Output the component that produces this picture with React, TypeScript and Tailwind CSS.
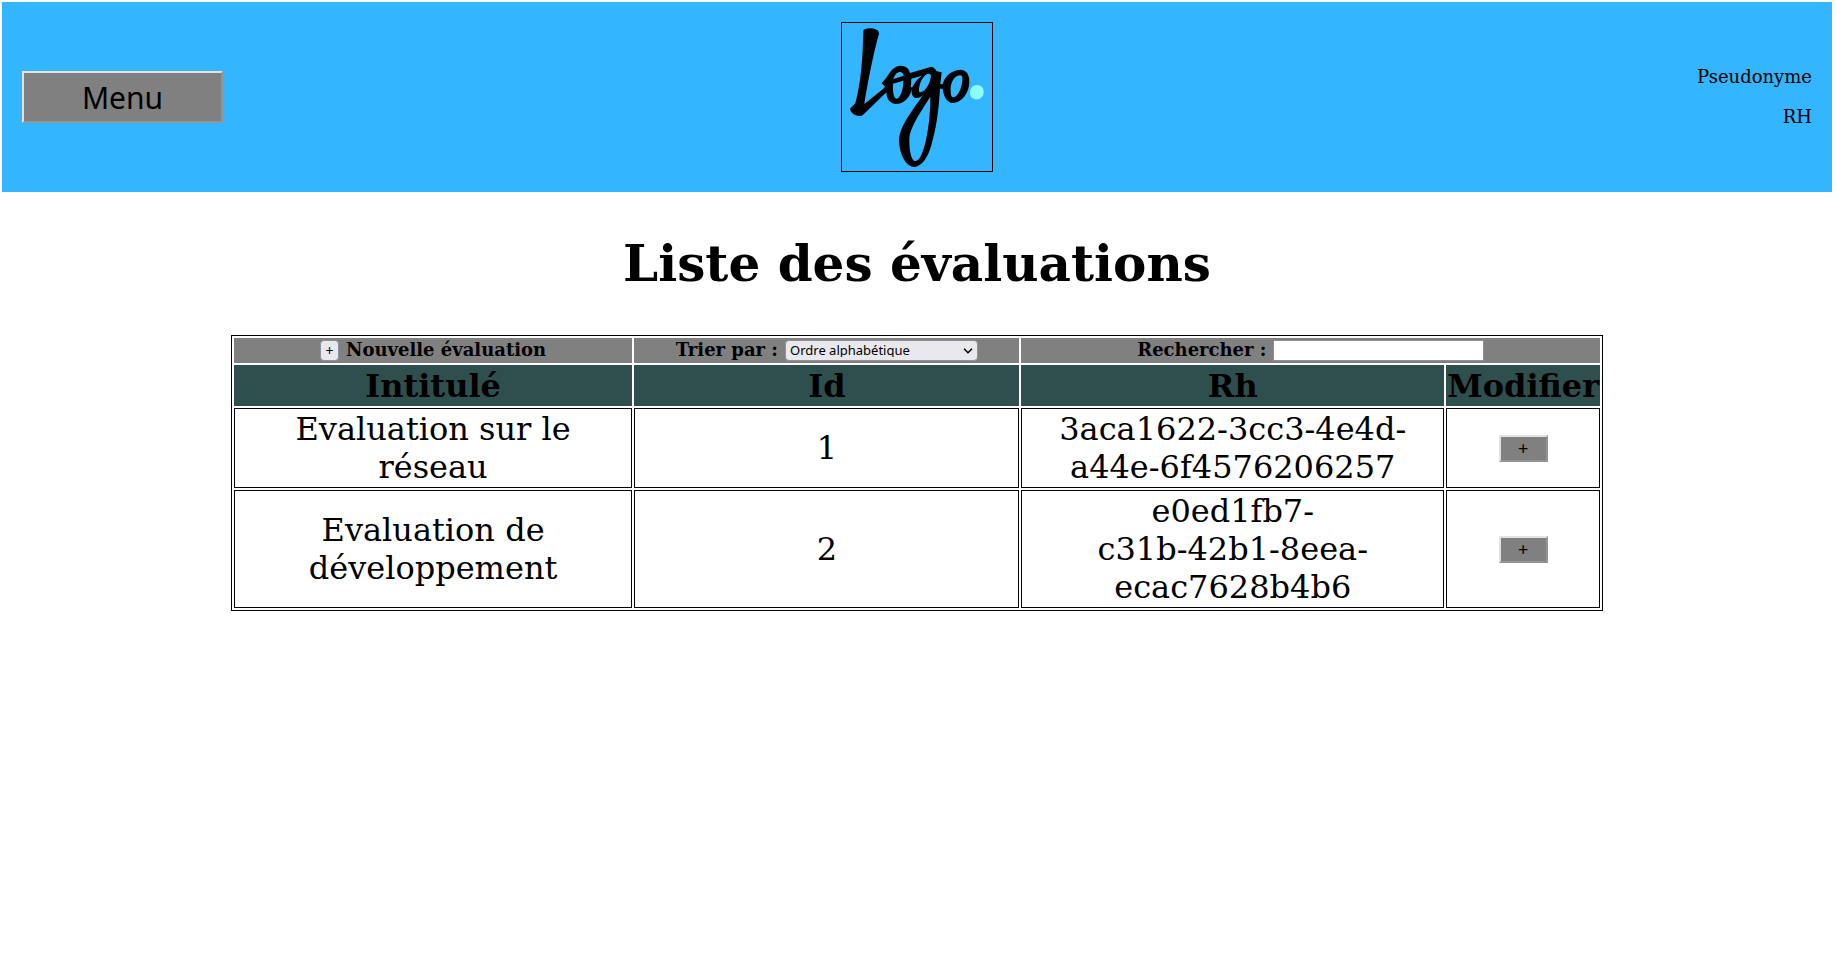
import React from "react";

type Evaluation = { id: number; title: string; rh: string };

const evaluations: Evaluation[] = [
  { id: 1, title: "Evaluation sur le réseau", rh: "3aca1622-3cc3-4e4d-\na44e-6f4576206257" },
  { id: 2, title: "Evaluation de développement", rh: "e0ed1fb7-\nc31b-42b1-8eea-\necac7628b4b6" },
];

function Logo() {
  return (
    <svg
      viewBox="36 39 450 444"
      className="h-[150px] w-[152px] border border-black"
      role="img"
      aria-label="Logo"
    >
      <path d="M101 59 Q124 50 143 61 Q149 68 145 79 C136 110 118 190 103 282 L160 236 L165 230 L155 220 L170 202 C181 183 193 168 212 167 C227 167 237 176 240 189 L304 170 Q312 171 320 184 L335 187 L331 222 L338 223 C343 199 366 179 393 179 C411 181 419 197 418 217 C417 250 395 279 368 279 C352 277 341 262 338 236 L330 236 C327 285 322 340 308 390 C299 430 282 468 253 471 C226 471 208 428 207 393 C207 351 246 303 281 253 C274 262 263 266 254 263 C245 258 244 246 246 236 C240 263 220 283 196 282 C180 280 170 268 169 247 L98 316 Q90 321 73 314 Q58 304 61 295 L76 280 C93 218 98 145 100 67 Z" />
      <path
        fill="#33b6ff"
        d="M190 207 C194 194 202 186 211 186 C217 187 220 191 221 197 Z M189 221 L220 212 C220 243 209 266 199 266 C191 264 188 244 189 221 Z M267 243 C266 224 278 197 292 192 Q301 190 303 197 C300 221 287 243 273 246 Q267 248 267 243 Z M244 206 L275 197 C262 207 252 220 247 232 L242 232 Q244 219 244 206 Z M301 260 C302 313 291 410 269 444 Q262 455 254 453 C243 450 237 418 238 384 C240 351 275 302 301 260 Z M362 242 C360 220 373 197 389 196 C397 196 398 202 397 211 C395 238 383 260 371 262 C364 262 362 254 362 242 Z"
      />
      <path fill="#8cfff8" d="M440 225 C454 225 462 235 461 248 C460 260 451 268 440 268 C428 268 420 260 420 249 C420 236 427 226 440 225 Z" />
    </svg>
  );
}

function EditButton({ title }: { title: string }) {
  return (
    <button
      type="button"
      aria-label={`Modifier ${title}`}
      className="mx-auto block h-[27px] w-[49px] border-2 border-t-[#e3e3e3] border-r-[#949494] border-b-[#949494] border-l-[#e3e3e3] bg-[#808080] font-['Noto_Sans',sans-serif] text-lg leading-none"
    >
      +
    </button>
  );
}

export default function App() {
  return (
    <div className="min-h-screen bg-white py-0.5 pr-1 pl-0.5 font-['DejaVu_Serif',serif] text-black">
      <header className="grid grid-cols-3 items-center bg-[#33b6ff] p-5">
        <button
          type="button"
          className="h-[52px] w-[201px] border-2 border-t-[#e3e3e3] border-r-[#949494] border-b-[#949494] border-l-[#e3e3e3] bg-[#808080] pt-0.5 font-['Noto_Sans',sans-serif] text-[30px] leading-none"
        >
          Menu
        </button>
        <div className="justify-self-center">
          <Logo />
        </div>
        <div className="flex flex-col gap-[18px] text-right text-lg leading-[22px]">
          <p>Pseudonyme</p>
          <p>RH</p>
        </div>
      </header>

      <main>
        <h1 className="mt-[42px] text-center text-[50px] leading-[60px] font-bold">Liste des évaluations</h1>

        <table className="mx-auto mt-[41px] w-3/4 table-fixed border-separate border-spacing-0.5 border border-black text-center text-[32px] leading-[38px]">
          <colgroup>
            <col className="w-[29.3%]" />
            <col className="w-[28.3%]" />
            <col className="w-[31.07%]" />
            <col className="w-[11.33%]" />
          </colgroup>
          <thead>
            <tr className="bg-[#808080] text-lg leading-[19px]">
              <th className="h-[25px] p-0">
                <div className="flex items-start justify-center gap-[7px] py-0.5">
                  <button
                    type="button"
                    id="new-evaluation"
                    className="h-[21px] w-[19px] rounded-sm border border-[#8f8f9d] bg-[#e9e9ed] font-['Noto_Sans',sans-serif] text-sm leading-none font-normal"
                  >
                    +
                  </button>
                  <label htmlFor="new-evaluation">Nouvelle évaluation</label>
                </div>
              </th>
              <th className="p-0">
                <div className="flex items-start justify-center gap-[7px] py-0.5">
                  <label htmlFor="sort">Trier par :</label>
                  <div className="relative flex">
                    <select
                      id="sort"
                      className="h-[21px] w-[193px] appearance-none rounded-sm border border-[#8f8f9d] bg-[#e9e9ed] pl-1 font-['Noto_Sans',sans-serif] text-[13px] leading-none font-normal"
                    >
                      <option>Ordre alphabétique</option>
                    </select>
                    <svg
                      viewBox="0 0 10 6"
                      className="pointer-events-none absolute top-2 right-[5px] h-1.5 w-2.5"
                      fill="none"
                      stroke="black"
                      strokeWidth="1.5"
                      aria-hidden="true"
                    >
                      <path d="M1 .8 5 4.8 9 .8" />
                    </svg>
                  </div>
                </div>
              </th>
              <th className="p-0" colSpan={2}>
                <div className="flex items-start justify-center gap-[7px] py-0.5">
                  <label htmlFor="search">Rechercher :</label>
                  <input
                    id="search"
                    type="text"
                    className="h-[21px] w-[211px] border border-[#8f8f9d] bg-white px-1 font-['Noto_Sans',sans-serif] text-[13px] font-normal"
                  />
                </div>
              </th>
            </tr>
            <tr className="bg-[#2f4f4f]">
              <th className="h-[41px] p-0">Intitulé</th>
              <th className="p-0">Id</th>
              <th className="p-0">Rh</th>
              <th className="p-0">Modifier</th>
            </tr>
          </thead>
          <tbody>
            {evaluations.map((evaluation) => (
              <tr key={evaluation.id}>
                <td className="border border-black px-10 py-px">{evaluation.title}</td>
                <td className="border border-black p-px">{evaluation.id}</td>
                <td className="border border-black px-8 py-px whitespace-pre-line">{evaluation.rh}</td>
                <td className="border border-black p-px">
                  <EditButton title={evaluation.title} />
                </td>
              </tr>
            ))}
          </tbody>
        </table>
      </main>
    </div>
  );
}
